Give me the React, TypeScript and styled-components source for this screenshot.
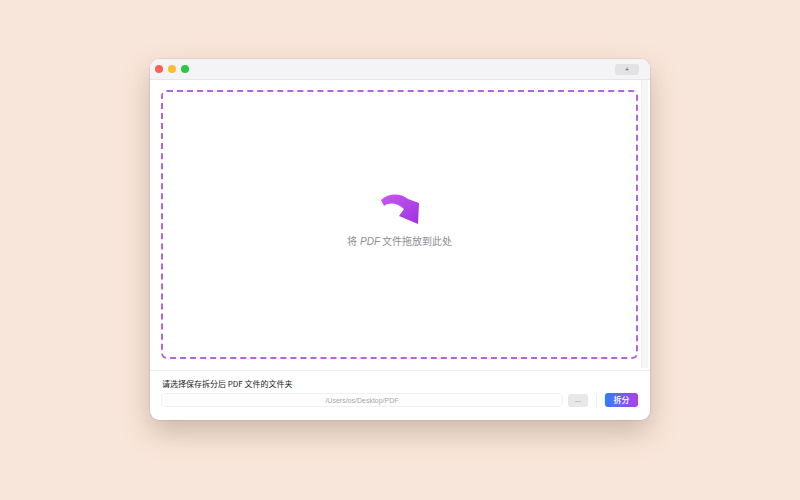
import React from "react";
import styled, { createGlobalStyle } from "styled-components";

const GlobalStyle = createGlobalStyle`
  html, body {
    margin: 0;
    padding: 0;
    background: #f9e6da;
  }
  body {
    font-family: "Noto Sans CJK SC", "Liberation Sans", sans-serif;
  }
`;

const Page = styled.div`
  width: 800px;
  height: 500px;
  display: flex;
  justify-content: center;
  align-items: flex-start;
  padding-top: 59px;
  box-sizing: border-box;
`;

const Window = styled.div`
  width: 500px;
  height: 361px;
  background: #ffffff;
  border-radius: 9px;
  overflow: hidden;
  display: flex;
  flex-direction: column;
  box-shadow: 0 12px 28px rgba(90, 60, 40, 0.28), 0 0 0 0.5px rgba(0, 0, 0, 0.12);
`;

const TitleBar = styled.div`
  height: 20px;
  flex-shrink: 0;
  display: flex;
  align-items: center;
  padding: 0 11px 0 5px;
  background: #f4f4f6;
  border-bottom: 1px solid #e6e6e8;
`;

const Lights = styled.div`
  display: flex;
  gap: 5px;
`;

const Light = styled.span<{ $color: string }>`
  width: 8px;
  height: 8px;
  border-radius: 50%;
  background: ${(p) => p.$color};
`;

const TitleButton = styled.button`
  margin-left: auto;
  width: 24px;
  height: 11px;
  padding: 0;
  border: none;
  border-radius: 3px;
  background: #e3e3e5;
  color: #555;
  font-size: 7px;
  line-height: 11px;
  font-family: "Liberation Sans", sans-serif;
`;

const Content = styled.div`
  flex: 1;
  display: flex;
  min-height: 0;
`;

const DropArea = styled.div`
  flex: 1;
  padding: 10px 3px 11px 11px;
  display: flex;
`;

const DropZone = styled.div`
  flex: 1;
  border: 2px dashed #b264de;
  border-radius: 6px;
  display: flex;
  flex-direction: column;
  align-items: center;
  justify-content: center;
  gap: 8px;
  padding-bottom: 8px;
`;

const DropText = styled.div`
  font-size: 10px;
  color: #8e8e93;
  em {
    font-family: "Liberation Sans", sans-serif;
    font-style: italic;
    margin: 0 2px 0 3px;
  }
`;

const ScrollTrack = styled.div`
  width: 6px;
  margin: 0 2px 2px 0;
  background: #f6f6f6;
  border-left: 1px solid #efefef;
`;

const Footer = styled.div`
  flex-shrink: 0;
  border-top: 1px solid #efefef;
  padding: 7px 12px 13px 11px;
  display: flex;
  flex-direction: column;
  gap: 4px;
`;

const Label = styled.div`
  font-size: 8px;
  color: #222;
  padding-left: 1px;
  line-height: 11px;
`;

const Row = styled.div`
  display: flex;
  align-items: center;
  height: 14px;
`;

const PathInput = styled.div`
  flex: 1;
  height: 14px;
  border: 1px solid #f1f1f1;
  border-radius: 4px;
  box-sizing: border-box;
  background: #fdfdfd;
  color: #a8a8a8;
  font-size: 7px;
  font-family: "Liberation Sans", sans-serif;
  display: flex;
  align-items: center;
  justify-content: center;
`;

const BrowseButton = styled.button`
  margin-left: 5px;
  width: 20px;
  height: 13px;
  padding: 0;
  border: none;
  border-radius: 3px;
  background: #e8e8ea;
  color: #666;
  font-size: 7px;
  line-height: 10px;
  font-family: "Liberation Sans", sans-serif;
`;

const Divider = styled.div`
  width: 1px;
  height: 13px;
  margin: 0 8px 0 8px;
  background: #eeeeee;
`;

const SplitButton = styled.button`
  width: 33px;
  height: 14px;
  padding: 0;
  border: none;
  border-radius: 3px;
  background: linear-gradient(90deg, #2d7ff8, #b23ee6);
  color: #fff;
  font-size: 8px;
  font-weight: 500;
  font-family: "Noto Sans CJK SC", sans-serif;
  line-height: 14px;
`;

const ArrowIcon: React.FC = () => (
  <svg width="40" height="32" viewBox="0 0 40 32" style={{ marginLeft: 2 }}>
    <defs>
      <linearGradient id="arrowGrad" x1="0" y1="0" x2="1" y2="1">
        <stop offset="0" stopColor="#c858f2" />
        <stop offset="1" stopColor="#9d32e0" />
      </linearGradient>
    </defs>
    <path
      d="M0 7 C 8 0, 19 0, 27 6 L 38 10 L 37 31 L 18 23 L 23 16 C 16 10, 9 9, 3 13 Z"
      fill="url(#arrowGrad)"
    />
  </svg>
);

const App: React.FC = () => {
  return (
    <>
      <GlobalStyle />
      <Page>
        <Window>
          <TitleBar>
            <Lights>
              <Light $color="#fe5f57" />
              <Light $color="#febc2e" />
              <Light $color="#28c840" />
            </Lights>
            <TitleButton>+</TitleButton>
          </TitleBar>
          <Content>
            <DropArea>
              <DropZone>
                <ArrowIcon />
                <DropText>
                  将<em>PDF</em>文件拖放到此处
                </DropText>
              </DropZone>
            </DropArea>
            <ScrollTrack />
          </Content>
          <Footer>
            <Label>请选择保存拆分后 PDF 文件的文件夹</Label>
            <Row>
              <PathInput>/Users/os/Desktop/PDF</PathInput>
              <BrowseButton>...</BrowseButton>
              <Divider />
              <SplitButton>拆分</SplitButton>
            </Row>
          </Footer>
        </Window>
      </Page>
    </>
  );
};

export default App;
